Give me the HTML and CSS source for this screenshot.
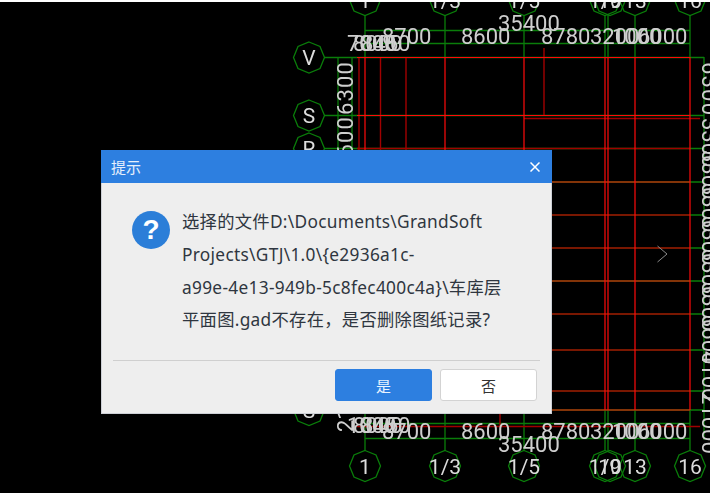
FILE: index.html
```html
<!DOCTYPE html>
<html lang="zh-CN">
<head>
<meta charset="utf-8">
<title>提示</title>
<link rel="stylesheet" href="styles.css">
</head>
<body>
<main class="stage">
  <svg class="cad" viewBox="0 2 710 491" width="710" height="491" aria-label="CAD grid">
    <defs>
      <polygon id="oct" points="0,-15.5 11,-11 15.5,0 11,11 0,15.5 -11,11 -15.5,0 -11,-11"/>
    </defs>
    <g class="green">
      <path d="M324 57.500H704M324 115.500H704M324 148.500H704M552 182H704M552 215H704M552 248H704M552 281H704M552 314H704M552 350H704M552 391H704M552 410H704"/>
      <path d="M365 15V58M445 15V58M524 15V58M605 15V58M608 15V58M635 15V58M690 15V58"/>
      <path d="M365 30.500H690M365 43.500H690M365 423.500H690M365 438.500H690"/>
      <path d="M338 57V160M352 57V160M704 57V440"/>
      <path d="M365 414V451M445 414V451M524 414V451M605 410V451M608 410V451M635 410V451M690 410V451"/>
      <use href="#oct" x="309" y="57.500"/><use href="#oct" x="309" y="115.500"/><use href="#oct" x="309" y="148.500"/><use href="#oct" x="309" y="410"/>
      <use href="#oct" x="365" y="0"/><use href="#oct" x="445" y="0"/><use href="#oct" x="524" y="0"/><use href="#oct" x="605" y="0"/><use href="#oct" x="610" y="0"/><use href="#oct" x="635" y="0"/><use href="#oct" x="690" y="0"/>
      <use href="#oct" x="365" y="466"/><use href="#oct" x="445" y="466"/><use href="#oct" x="524" y="466"/><use href="#oct" x="605" y="466"/><use href="#oct" x="610" y="466"/><use href="#oct" x="635" y="466"/><use href="#oct" x="690" y="466"/>
    </g>
    <g class="darkred">
      <path d="M359 57V150M380.500 57V150M406 57V150M544 48V115M500 414V426M524 118.500H700M357 148.500H690M552 215H690M552 248H690M552 314H690M552 350H690M552 391H690M357 426.500H700"/>
    </g>
    <g class="red">
      <path d="M357 57.500H690M357 115.500H690M552 182H690M552 281H690M552 410H690"/>
      <path d="M365 57V150M445 57V150M524 57V150M605 57V410M608 57V410M635 57V410M690 57V410"/>
    </g>
    <g class="dim">
      <text x="382" y="44">8700</text><text x="461" y="44">8600</text><text x="541" y="44">8780</text><text x="590" y="44">3200</text><text x="612" y="44">1000</text><text x="638" y="44">6000</text>
      <text x="347" y="51">7000</text><text x="353" y="51">8000</text><text x="361" y="51">8450</text>
      <text x="498" y="31">35400</text>
      <text x="382" y="439">8700</text><text x="461" y="439">8600</text><text x="541" y="439">8780</text><text x="590" y="439">3200</text><text x="612" y="439">1000</text><text x="638" y="439">6000</text>
      <text x="347" y="433">1000</text><text x="353" y="433">8000</text><text x="361" y="433">8450</text>
      <text x="498" y="452">35400</text>
      <text transform="translate(353 115) rotate(-90)" textLength="53">6300</text>
      <text transform="translate(353 170) rotate(-90)" textLength="53">8600</text>
      <text transform="translate(353 432) rotate(-90)">21000</text>
      <text transform="translate(702 62) rotate(90)" textLength="53">6300</text>
      <text transform="translate(702 118) rotate(90)">3300</text>
      <text transform="translate(702 150) rotate(90)">3300</text>
      <text transform="translate(702 183) rotate(90)">3300</text>
      <text transform="translate(702 216) rotate(90)">3300</text>
      <text transform="translate(702 249) rotate(90)">3300</text>
      <text transform="translate(702 282) rotate(90)">3300</text>
      <text transform="translate(702 315) rotate(90)">3600</text>
      <text transform="translate(702 351) rotate(90)">4100</text>
      <text transform="translate(702 392) rotate(90)">21000</text>
    </g>
    <g class="label">
      <text x="309" y="65">V</text><text x="309" y="123">S</text><text x="309" y="156">R</text><text x="309" y="418">S</text>
      <text x="365" y="8">1</text><text x="445" y="8">1/3</text><text x="524" y="8">1/5</text><text x="605" y="8">1/9</text><text x="610" y="8">10</text><text x="635" y="8">13</text><text x="690" y="8">16</text>
      <text x="365" y="474">1</text><text x="445" y="474">1/3</text><text x="524" y="474">1/5</text><text x="605" y="474">1/9</text><text x="610" y="474">10</text><text x="635" y="474">13</text><text x="690" y="474">16</text>
    </g>
    <path class="chevron" d="M657.500 246L667 254L657.500 262"/>
  </svg>

  <section class="dialog" role="dialog" aria-labelledby="dlg-title">
    <header class="dialog-head">
      <h1 class="dialog-title" id="dlg-title">提示</h1>
      <svg class="close" viewBox="0 0 10 10" width="10" height="10" aria-label="关闭"><path d="M0.500 0.500L9.500 9.500M9.500 0.500L0.500 9.500"/></svg>
    </header>
    <div class="dialog-body">
      <div class="question" aria-hidden="true">?</div>
      <p class="message">选择的文件D:\Documents\GrandSoft<br>Projects\GTJ\1.0\{e2936a1c-<br>a99e-4e13-949b-5c8fec400c4a}\车库层<br>平面图.gad不存在，是否删除图纸记录?</p>
    </div>
    <footer class="dialog-foot">
      <button class="btn btn-primary" type="button">是</button>
      <button class="btn" type="button">否</button>
    </footer>
  </section>
</main>
</body>
</html>
```
FILE: styles.css
```css
html, body { margin: 0; padding: 0; background: #fff; }
body { width: 714px; height: 493px; overflow: hidden; }

.stage {
  position: relative;
  width: 710px;
  height: 491px;
  margin-top: 2px;
  background: #000;
  overflow: hidden;
}
.cad { display: block; filter: blur(0.35px); }
.cad path, .cad use { fill: none; }
.green { stroke: #0a7d0a; stroke-width: 1.300; fill: none; }
.red { stroke: #ff0a0a; stroke-width: 1.200; fill: none; }
.darkred { stroke: #a00000; stroke-width: 1.400; fill: none; }
.dim text {
  font-family: Roboto, "Liberation Sans", sans-serif;
  font-weight: 400;
  font-size: 22px;
  fill: #cfcfcf;
}
.label text {
  font-family: Roboto, "Liberation Sans", sans-serif;
  font-weight: 400;
  font-size: 21px;
  fill: #dcdcdc;
  text-anchor: middle;
}
.chevron { stroke: #8a8a8a; stroke-width: 1; fill: none; }

.dialog {
  position: absolute;
  left: 101px;
  top: 148px;
  width: 451px;
  height: 264px;
  box-sizing: border-box;
  display: flex;
  flex-direction: column;
  background: #eeeeee;
  border: 1px solid #cdd0d6;
  border-top: 0;
  font-family: "Noto Sans", "Noto Sans CJK SC", sans-serif;
}
.dialog-head {
  height: 33px;
  flex: none;
  margin: 0 -1px;
  padding: 0 12px 0 10px;
  display: flex;
  align-items: center;
  justify-content: space-between;
  background: #2d7fe0;
}
.dialog-title {
  margin: 0;
  font-size: 15px;
  font-weight: 400;
  color: #e6f0fc;
  font-family: "Noto Sans CJK SC", sans-serif;
}
.close { stroke: #fff; stroke-width: 1.500; fill: none; }

.dialog-body {
  flex: 1;
  display: flex;
  gap: 12px;
  margin: 0 11px;
  padding: 23px 0 0 19px;
  border-bottom: 1px solid #cfcfcf;
}
.question {
  flex: none;
  width: 38px;
  height: 38px;
  margin-top: 5px;
  border-radius: 50%;
  background: #2b7ed8;
  color: #fff;
  font: 700 28px/38px "Liberation Sans", sans-serif;
  text-align: center;
}
.message {
  margin: 0;
  font-size: 17.300px;
  letter-spacing: 0.300px;
  line-height: 32.800px;
  color: #2f3640;
  white-space: nowrap;
}
.dialog-foot {
  flex: none;
  height: 52px;
  box-sizing: border-box;
  padding: 8px 14px 0 0;
  display: flex;
  justify-content: flex-end;
  gap: 8px;
}
.btn {
  width: 97px;
  height: 32px;
  padding: 0;
  border: 1px solid #d3d3d3;
  border-radius: 3px;
  background: #fff;
  color: #333;
  font: 15px "Noto Sans CJK SC", sans-serif;
}
.btn-primary {
  background: #2d7fe0;
  border-color: #2d7fe0;
  color: #eaf3ff;
}
```
